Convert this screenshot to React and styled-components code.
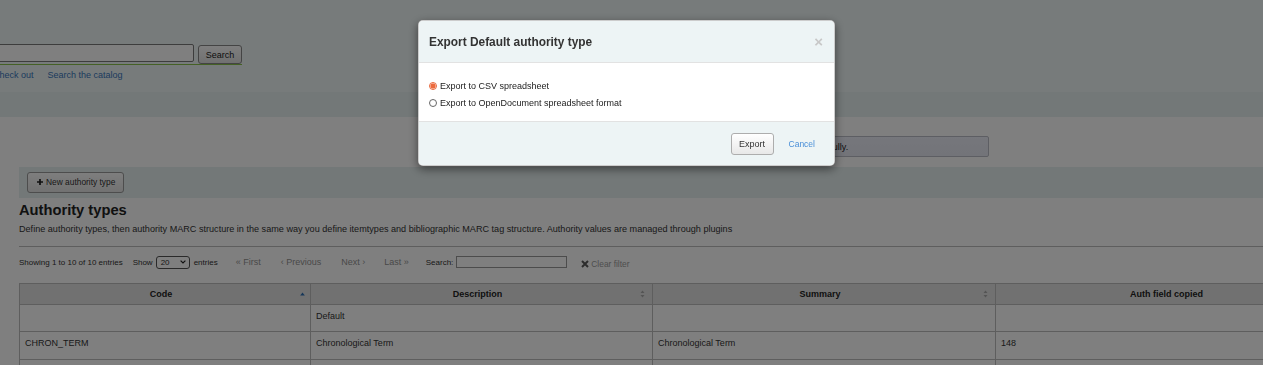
import React from "react";
import styled, { createGlobalStyle } from "styled-components";

const Global = createGlobalStyle`
  html, body { margin: 0; padding: 0; }
  body {
    font-family: "Liberation Sans", Arial, sans-serif;
    color: #333;
    background: #fff;
    overflow: hidden;
    width: 1263px;
    height: 365px;
  }
  * { box-sizing: border-box; }
`;

const Page = styled.div`
  width: 1263px;
  height: 365px;
  overflow: hidden;
`;

const HeaderTop = styled.div`
  height: 92px;
  background: #eff6f6;
  padding-top: 44px;
`;

const SearchForm = styled.div`
  display: flex;
  align-items: flex-start;
  gap: 4px;
  width: 282px;
  height: 21px;
  margin-left: -40px;
  border-bottom: 1px solid #8bc34a;
`;

const SearchInput = styled.input`
  width: 234px;
  height: 18px;
  border: 1px solid #7a7a7a;
  border-radius: 2px;
  background: #fff;
  margin: 0;
  padding: 0 4px;
`;

const SearchButton = styled.button`
  width: 44px;
  height: 19px;
  margin: 1px 0 0;
  padding: 0;
  font-family: "Liberation Sans", Arial, sans-serif;
  font-size: 9px;
  color: #222;
  border: 1px solid #888;
  border-radius: 3px;
  background: linear-gradient(#fdfdfd, #e2e2e2);
`;

const QuickLinks = styled.div`
  display: flex;
  gap: 14px;
  margin: 5px 0 0 -7px;
  font-size: 9px;
  line-height: 11px;
`;

const HeadLink = styled.a`
  color: #3a78bd;
  text-decoration: none;
`;

const Breadcrumbs = styled.div`
  height: 25px;
  background: #e6f0f0;
`;

const Main = styled.div`
  padding: 19px 0 0 19px;
`;

const MessageBox = styled.div`
  width: 417px;
  height: 21px;
  margin: 0 274px 0 auto;
  display: flex;
  align-items: center;
  justify-content: center;
  font-size: 9px;
  color: #222;
  background: linear-gradient(#eceef8, #e6e8f2);
  border: 1px solid #bbbdc6;
  border-radius: 2px;
`;

const Toolbar = styled.div`
  height: 31px;
  margin-top: 10px;
  padding: 4px 8px;
  background: #e6f0f0;
`;

const ToolButton = styled.button`
  display: inline-flex;
  align-items: center;
  gap: 3px;
  height: 21px;
  padding: 0 8px 0 9px;
  font-family: "Liberation Sans", Arial, sans-serif;
  font-size: 8.4px;
  color: #333;
  border: 1px solid #9a9a9a;
  border-radius: 3px;
  background: linear-gradient(#fcfcfc, #e4e4e4);
`;

const Title = styled.h1`
  margin: 3px 0 0;
  font-size: 14.7px;
  line-height: 18px;
  font-weight: bold;
  color: #222;
`;

const Intro = styled.p`
  margin: 4px 0 0;
  font-size: 9.1px;
  line-height: 12px;
  color: #333;
`;

const Rule = styled.div`
  margin-top: 11px;
  border-top: 1px solid #bdbdbd;
`;

const Pager = styled.div`
  display: flex;
  align-items: center;
  height: 14px;
  margin-top: 8px;
  font-size: 8px;
  color: #333;
  white-space: nowrap;
`;

const PagerText = styled.span`
  margin-left: ${(p) => p.$gap || 0}px;
`;

const PagerLink = styled.span`
  margin: -1px 0 0 ${(p) => p.$gap || 0}px;
  font-size: 9px;
  color: #929292;
`;

const Select = styled.div`
  display: flex;
  align-items: center;
  justify-content: space-between;
  width: 34px;
  height: 13px;
  margin: 0 4px 0 3px;
  padding: 0 3px 0 4px;
  border: 1px solid #555;
  border-radius: 3px;
  background: #fff;
`;

const FilterInput = styled.div`
  width: 111px;
  height: 12px;
  margin-left: 3px;
  border: 1px solid #999;
  background: #fff;
`;

const ClearFilter = styled.span`
  display: inline-flex;
  align-items: center;
  gap: 2px;
  margin: 3px 0 0 14px;
  font-size: 8.4px;
  color: #9c9c9c;
`;

const Table = styled.table`
  border-collapse: collapse;
  table-layout: fixed;
  width: 1326px;
  margin-top: 14px;
  font-size: 9px;
`;

const HeadRow = styled.tr`
  height: 21px;
`;

const Row = styled.tr`
  height: ${(p) => p.$h}px;
`;

const Th = styled.th`
  position: relative;
  border: 1px solid #bcbcbc;
  background: #e2e2e2;
  font-weight: bold;
  text-align: center;
  color: #222;
  padding: 0 14px 0 6px;
`;

const Td = styled.td`
  border: 1px solid #bcbcbc;
  padding: 6px 5px 0;
  vertical-align: top;
  line-height: 11px;
  color: #333;
`;

const SortIcon = styled.svg`
  position: absolute;
  right: ${(p) => p.$right}px;
  top: 50%;
  transform: translateY(-50%);
`;

const Backdrop = styled.div`
  position: fixed;
  inset: 0;
  background: rgba(0, 0, 0, 0.5);
`;

const Modal = styled.div`
  position: fixed;
  left: 418px;
  top: 20px;
  width: 417px;
  background: #fff;
  border: 1px solid rgba(0, 0, 0, 0.2);
  border-radius: 5px;
  box-shadow: 0 3px 10px rgba(0, 0, 0, 0.5);
  overflow: hidden;
`;

const ModalHeader = styled.div`
  display: flex;
  align-items: center;
  justify-content: space-between;
  height: 42px;
  padding: 0 11px 0 10px;
  background: #edf4f5;
  border-bottom: 1px solid #e2e2e2;
`;

const ModalTitle = styled.h3`
  margin: 0;
  font-size: 11.9px;
  font-weight: bold;
  color: #333;
`;

const Close = styled.span`
  font-size: 15px;
  font-weight: bold;
  line-height: 1;
  color: #c8c8c8;
`;

const ModalBody = styled.div`
  padding: 15px 10px 10px;
`;

const Option = styled.label`
  display: flex;
  align-items: center;
  gap: 3px;
  height: 16.5px;
  font-size: 9px;
  color: #222;
`;

const Radio = styled.span`
  width: 8px;
  height: 8px;
  border-radius: 50%;
  border: 1px solid ${(p) => (p.$on ? "#e8663a" : "#666")};
  background: ${(p) =>
    p.$on ? "radial-gradient(circle, #ec6a3d 0 2.2px, #fde7de 2.8px)" : "#fff"};
  flex: none;
`;

const ModalFooter = styled.div`
  display: flex;
  align-items: center;
  justify-content: flex-end;
  gap: 15px;
  height: 44px;
  padding-right: 19px;
  background: #edf4f5;
  border-top: 1px solid #e2e2e2;
`;

const ExportButton = styled.button`
  width: 43px;
  height: 22px;
  padding: 0;
  font-family: "Liberation Sans", Arial, sans-serif;
  font-size: 9px;
  color: #333;
  border: 1px solid #adadad;
  border-radius: 3px;
  background: linear-gradient(#fff, #e8e8e8);
`;

const CancelLink = styled.a`
  font-size: 8.5px;
  color: #4a8fd8;
  text-decoration: none;
`;

const SortBoth = () => (
  <SortIcon $right={7} width="5" height="8" viewBox="0 0 5 8">
    <path d="M2.5 0.5L4.5 3H0.5Z M2.5 7.5L4.5 5H0.5Z" fill="#a9a9a9" />
  </SortIcon>
);

const SortAsc = () => (
  <SortIcon $right={5} width="5" height="4" viewBox="0 0 5 4">
    <path d="M2.5 0.5L4.8 3.5H0.2Z" fill="#2a6db3" />
  </SortIcon>
);

const rows = [
  { h: 27, c: ["", "Default", "", ""] },
  { h: 28, c: ["CHRON_TERM", "Chronological Term", "Chronological Term", "148"] },
  { h: 27, c: ["CORPO_NAME", "Corporate Name", "Corporate Name", "110"] },
];

export default function App() {
  return (
    <>
      <Global />
      <Page>
        <HeaderTop>
          <SearchForm>
            <SearchInput />
            <SearchButton>Search</SearchButton>
          </SearchForm>
          <QuickLinks>
            <HeadLink>Check out</HeadLink>
            <HeadLink>Search the catalog</HeadLink>
          </QuickLinks>
        </HeaderTop>
        <Breadcrumbs />
        <Main>
          <MessageBox>Authority type added successfully.</MessageBox>
          <Toolbar>
            <ToolButton>
              <svg width="6" height="6" viewBox="0 0 7 7">
                <path d="M2.5 0H4.5V2.5H7V4.5H4.5V7H2.5V4.5H0V2.5H2.5Z" fill="#222" />
              </svg>
              New authority type
            </ToolButton>
          </Toolbar>
          <Title>Authority types</Title>
          <Intro>
            Define authority types, then authority MARC structure in the same way you define
            itemtypes and bibliographic MARC tag structure. Authority values are managed through
            plugins
          </Intro>
          <Rule />
          <Pager>
            <PagerText>Showing 1 to 10 of 10 entries</PagerText>
            <PagerText $gap={10}>Show</PagerText>
            <Select>
              <span>20</span>
              <svg width="6" height="4" viewBox="0 0 6 4">
                <path d="M0.6 0.6L3 3L5.4 0.6" stroke="#222" strokeWidth="1.2" fill="none" />
              </svg>
            </Select>
            <PagerText>entries</PagerText>
            <PagerLink $gap={18}>« First</PagerLink>
            <PagerLink $gap={20}>‹ Previous</PagerLink>
            <PagerLink $gap={20}>Next ›</PagerLink>
            <PagerLink $gap={19}>Last »</PagerLink>
            <PagerText $gap={17}>Search:</PagerText>
            <FilterInput />
            <ClearFilter>
              <svg width="8" height="8" viewBox="0 0 8 8">
                <path d="M1 1L7 7M7 1L1 7" stroke="#5a5a5a" strokeWidth="2" />
              </svg>
              Clear filter
            </ClearFilter>
          </Pager>
          <Table>
            <colgroup>
              <col style={{ width: 291 }} />
              <col style={{ width: 342 }} />
              <col style={{ width: 343 }} />
              <col style={{ width: 350 }} />
            </colgroup>
            <thead>
              <HeadRow>
                <Th>
                  Code
                  <SortAsc />
                </Th>
                <Th>
                  Description
                  <SortBoth />
                </Th>
                <Th>
                  Summary
                  <SortBoth />
                </Th>
                <Th>
                  Auth field copied
                  <SortBoth />
                </Th>
              </HeadRow>
            </thead>
            <tbody>
              {rows.map((r, i) => (
                <Row key={i} $h={r.h}>
                  {r.c.map((c, j) => (
                    <Td key={j}>{c}</Td>
                  ))}
                </Row>
              ))}
            </tbody>
          </Table>
        </Main>
      </Page>
      <Backdrop />
      <Modal>
        <ModalHeader>
          <ModalTitle>Export Default authority type</ModalTitle>
          <Close>×</Close>
        </ModalHeader>
        <ModalBody>
          <Option>
            <Radio $on />
            Export to CSV spreadsheet
          </Option>
          <Option>
            <Radio />
            Export to OpenDocument spreadsheet format
          </Option>
        </ModalBody>
        <ModalFooter>
          <ExportButton>Export</ExportButton>
          <CancelLink>Cancel</CancelLink>
        </ModalFooter>
      </Modal>
    </>
  );
}
